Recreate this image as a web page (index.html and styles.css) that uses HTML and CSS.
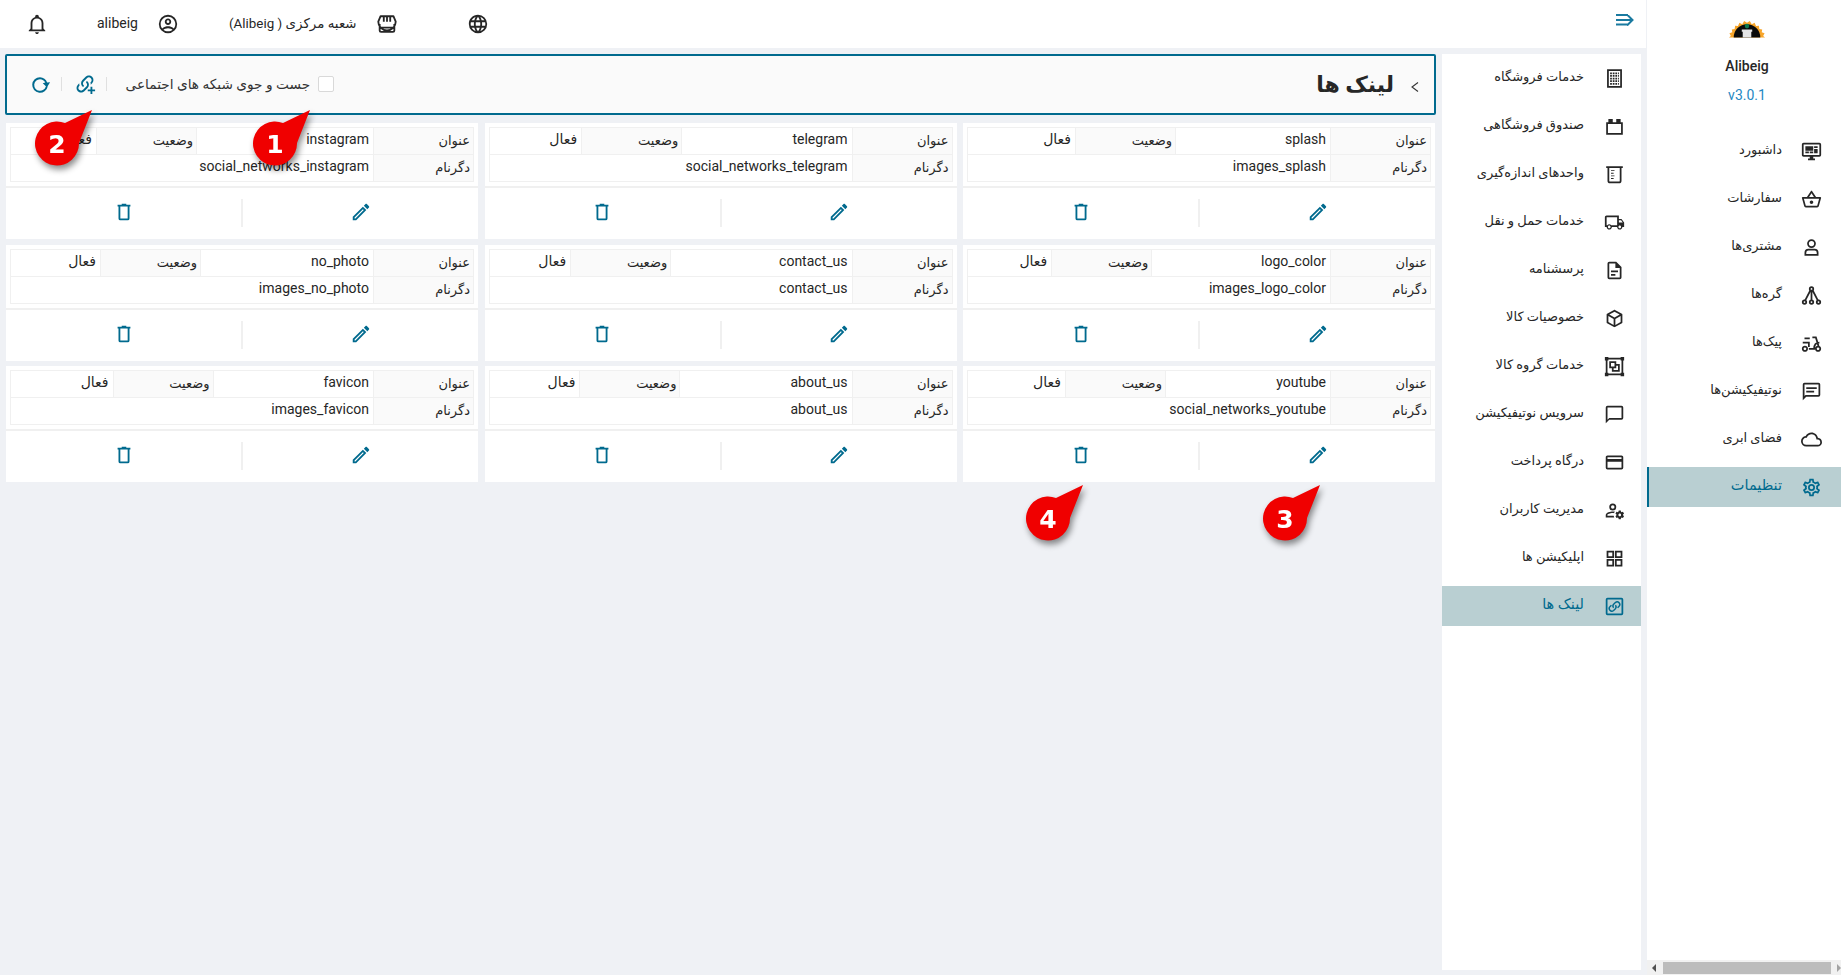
FILE: index.html
```html
<!DOCTYPE html>
<html lang="fa">
<head>
<meta charset="utf-8">
<title>لینک ها</title>
<link rel="stylesheet" href="styles.css">
</head>
<body>
<svg class="defs" aria-hidden="true">
  <symbol id="i-pencil" viewBox="0 0 24 24"><path d="M14.06,9L15,9.94L5.92,19H5V18.08L14.06,9M17.66,3C17.41,3 17.15,3.1 16.96,3.29L15.13,5.12L18.88,8.87L20.71,7.04C21.1,6.65 21.1,6 20.71,5.63L18.37,3.29C18.17,3.09 17.92,3 17.66,3M14.06,6.19L3,17.25V21H6.75L17.81,9.94L14.06,6.19Z"/></symbol>
  <symbol id="i-trash" viewBox="0 0 24 24"><path d="M9.5,3V4H5V6H6V19A2,2 0 0,0 8,21H16A2,2 0 0,0 18,19V6H19V4H14.5V3H9.5M8,6H16V19H8V6Z"/></symbol>
</svg>

<div class="app">
  <div class="workspace">
    <header class="topbar">
      <svg class="ico bell" viewBox="0 0 24 24"><path d="M10 21H14C14 22.1 13.1 23 12 23S10 22.1 10 21M21 19V20H3V19L5 17V11C5 7.9 7 5.2 10 4.3V4C10 2.9 10.9 2 12 2S14 2.9 14 4V4.3C17 5.2 19 7.9 19 11V17L21 19M17 11C17 8.2 14.8 6 12 6S7 8.2 7 11V18H17V11Z"/></svg>
      <div class="top-group user"><span>alibeig</span>
        <svg class="ico" viewBox="0 0 24 24"><path d="M12,2A10,10 0 0,0 2,12A10,10 0 0,0 12,22A10,10 0 0,0 22,12A10,10 0 0,0 12,2M7.07,18.28C7.5,17.38 10.12,16.5 12,16.5C13.88,16.5 16.5,17.38 16.93,18.28C15.57,19.36 13.86,20 12,20C10.14,20 8.43,19.36 7.07,18.28M18.36,16.83C16.93,15.09 13.46,14.5 12,14.5C10.54,14.5 7.07,15.09 5.64,16.83C4.62,15.5 4,13.82 4,12C4,7.59 7.59,4 12,4C16.41,4 20,7.59 20,12C20,13.82 19.38,15.5 18.36,16.83M12,6C10.06,6 8.5,7.56 8.5,9.5C8.5,11.44 10.06,13 12,13C13.94,13 15.5,11.44 15.5,9.5C15.5,7.56 13.94,6 12,6M12,11A1.5,1.5 0 0,1 10.5,9.5A1.5,1.5 0 0,1 12,8A1.5,1.5 0 0,1 13.5,9.5A1.5,1.5 0 0,1 12,11Z"/></svg>
      </div>
      <div class="top-group branch"><span dir="rtl">شعبه مرکزی ( Alibeig)</span>
        <svg class="ico stroke" viewBox="0 0 24 24"><path d="M5 3.5H19L21.5 9.5A2.4 2.4 0 0 1 2.5 9.5ZM4 12V19A1.5 1.5 0 0 0 5.5 20.5H18.5A1.5 1.5 0 0 0 20 19V12M4 16H20M8.5 3.5V9.5M12 3.5V9.5M15.5 3.5V9.5"/></svg>
      </div>
      <svg class="ico globe" viewBox="0 0 24 24"><path d="M16.36,14C16.44,13.34 16.5,12.68 16.5,12C16.5,11.32 16.44,10.66 16.36,10H19.74C19.9,10.64 20,11.31 20,12C20,12.69 19.9,13.36 19.74,14M14.59,19.56C15.19,18.45 15.65,17.25 15.97,16H18.92C17.96,17.65 16.43,18.93 14.59,19.56M14.34,14H9.66C9.56,13.34 9.5,12.68 9.5,12C9.5,11.32 9.56,10.65 9.66,10H14.34C14.43,10.65 14.5,11.32 14.5,12C14.5,12.68 14.43,13.34 14.34,14M12,19.96C11.17,18.76 10.5,17.43 10.09,16H13.91C13.5,17.43 12.83,18.76 12,19.96M8,8H5.08C6.03,6.34 7.57,5.06 9.4,4.44C8.8,5.55 8.35,6.75 8,8M5.08,16H8C8.35,17.25 8.8,18.45 9.4,19.56C7.57,18.93 6.03,17.65 5.08,16M4.26,14C4.1,13.36 4,12.69 4,12C4,11.31 4.1,10.64 4.26,10H7.64C7.56,10.66 7.5,11.32 7.5,12C7.5,12.68 7.56,13.34 7.64,14M12,4.03C12.83,5.23 13.5,6.57 13.91,8H10.09C10.5,6.57 11.17,5.23 12,4.03M18.92,8H15.97C15.65,6.75 15.19,5.55 14.59,4.44C16.43,5.07 17.96,6.34 18.92,8M12,2C6.47,2 2,6.5 2,12A10,10 0 0,0 12,22A10,10 0 0,0 22,12A10,10 0 0,0 12,2Z"/></svg>
      <svg class="toggle" viewBox="0 0 18 12"><path d="M0 1H12M0 6H16M0 10.5H12M11 0.5L16.5 6L11 11.5"/></svg>
    </header>

    <div class="body-row">
      <main class="content">
        <section class="page-head">
          <div class="title-wrap">
            <svg class="chev" viewBox="0 0 10 12"><path d="M8 1.5L2 6L8 10.5"/></svg>
            <h1>لینک ها</h1>
          </div>
          <div class="tools">
            <label class="search-check"><span class="box"></span><span>جست و جوی شبکه های اجتماعی</span></label>
            <span class="sep"></span>
            <svg class="tool" viewBox="0 0 24 24"><path d="M10.59 13.41C11 13.8 11 14.44 10.59 14.83C10.2 15.22 9.56 15.22 9.17 14.83C7.22 12.88 7.22 9.71 9.17 7.76V7.76L12.71 4.22C14.66 2.27 17.83 2.27 19.78 4.22C21.73 6.17 21.73 9.34 19.78 11.29L18.29 12.78C18.3 11.96 18.17 11.14 17.89 10.36L18.36 9.88C19.54 8.71 19.54 6.81 18.36 5.64C17.19 4.46 15.29 4.46 14.12 5.64L10.59 9.17C9.41 10.34 9.41 12.24 10.59 13.41M13.41 9.17C13.8 8.78 14.44 8.78 14.83 9.17C16.78 11.12 16.78 14.29 14.83 16.24V16.24L11.29 19.78C9.34 21.73 6.17 21.73 4.22 19.78C2.27 17.83 2.27 14.66 4.22 12.71L5.71 11.22C5.7 12.04 5.83 12.86 6.11 13.65L5.64 14.12C4.46 15.29 4.46 17.19 5.64 18.36C6.81 19.54 8.71 19.54 9.88 18.36L13.41 14.83C14.59 13.66 14.59 11.76 13.41 10.59C13 10.2 13 9.56 13.41 9.17M20 18V15H18V18H15V20H18V23H20V20H23V18H20Z"/></svg>
            <span class="sep"></span>
            <svg class="tool refresh" viewBox="0 0 24 24"><path d="M12 3.5A8.5 8.5 0 1 0 20.4 13.5H18.3A6.4 6.4 0 1 1 12 5.6C14.6 5.6 16.7 7.1 17.8 9.4L15 10L19.6 14.4L23 9L19.8 9.2C18.6 5.8 15.6 3.5 12 3.5Z"/></svg>
          </div>
        </section>

        <div class="cards">
          <article class="card"><table><tr><th>عنوان</th><td>splash</td><th>وضعیت</th><td>فعال</td></tr><tr><th>دگرنام</th><td colspan="3">images_splash</td></tr></table><div class="actions"><div class="act"><svg class="a-ico"><use href="#i-pencil"/></svg></div><div class="act"><svg class="a-ico"><use href="#i-trash"/></svg></div></div></article>
          <article class="card"><table><tr><th>عنوان</th><td>telegram</td><th>وضعیت</th><td>فعال</td></tr><tr><th>دگرنام</th><td colspan="3">social_networks_telegram</td></tr></table><div class="actions"><div class="act"><svg class="a-ico"><use href="#i-pencil"/></svg></div><div class="act"><svg class="a-ico"><use href="#i-trash"/></svg></div></div></article>
          <article class="card"><table><tr><th>عنوان</th><td>instagram</td><th>وضعیت</th><td>فعال</td></tr><tr><th>دگرنام</th><td colspan="3">social_networks_instagram</td></tr></table><div class="actions"><div class="act"><svg class="a-ico"><use href="#i-pencil"/></svg></div><div class="act"><svg class="a-ico"><use href="#i-trash"/></svg></div></div></article>
          <article class="card"><table><tr><th>عنوان</th><td>logo_color</td><th>وضعیت</th><td>فعال</td></tr><tr><th>دگرنام</th><td colspan="3">images_logo_color</td></tr></table><div class="actions"><div class="act"><svg class="a-ico"><use href="#i-pencil"/></svg></div><div class="act"><svg class="a-ico"><use href="#i-trash"/></svg></div></div></article>
          <article class="card"><table><tr><th>عنوان</th><td>contact_us</td><th>وضعیت</th><td>فعال</td></tr><tr><th>دگرنام</th><td colspan="3">contact_us</td></tr></table><div class="actions"><div class="act"><svg class="a-ico"><use href="#i-pencil"/></svg></div><div class="act"><svg class="a-ico"><use href="#i-trash"/></svg></div></div></article>
          <article class="card"><table><tr><th>عنوان</th><td>no_photo</td><th>وضعیت</th><td>فعال</td></tr><tr><th>دگرنام</th><td colspan="3">images_no_photo</td></tr></table><div class="actions"><div class="act"><svg class="a-ico"><use href="#i-pencil"/></svg></div><div class="act"><svg class="a-ico"><use href="#i-trash"/></svg></div></div></article>
          <article class="card"><table><tr><th>عنوان</th><td>youtube</td><th>وضعیت</th><td>فعال</td></tr><tr><th>دگرنام</th><td colspan="3">social_networks_youtube</td></tr></table><div class="actions"><div class="act"><svg class="a-ico"><use href="#i-pencil"/></svg></div><div class="act"><svg class="a-ico"><use href="#i-trash"/></svg></div></div></article>
          <article class="card"><table><tr><th>عنوان</th><td>about_us</td><th>وضعیت</th><td>فعال</td></tr><tr><th>دگرنام</th><td colspan="3">about_us</td></tr></table><div class="actions"><div class="act"><svg class="a-ico"><use href="#i-pencil"/></svg></div><div class="act"><svg class="a-ico"><use href="#i-trash"/></svg></div></div></article>
          <article class="card"><table><tr><th>عنوان</th><td>favicon</td><th>وضعیت</th><td>فعال</td></tr><tr><th>دگرنام</th><td colspan="3">images_favicon</td></tr></table><div class="actions"><div class="act"><svg class="a-ico"><use href="#i-pencil"/></svg></div><div class="act"><svg class="a-ico"><use href="#i-trash"/></svg></div></div></article>
        </div>
      </main>

      <nav class="submenu">
        <a class="sub-item"><svg class="m-ico" viewBox="0 0 24 24"><path class="ln" d="M4.5 2.5H19.5V21.5H4.5Z"/><path class="dots" d="M7 6H17M7 9H17M7 12H17M7 15H17M7 18H17"/></svg><span>خدمات فروشگاه</span></a>
        <a class="sub-item"><svg class="m-ico" viewBox="0 0 24 24"><path class="ln" d="M3.5 8H20.5V20.5H3.5Z"/><path d="M5 3.5H10V8H5ZM14 3.5H19V8H14Z"/></svg><span>صندوق فروشگاهی</span></a>
        <a class="sub-item"><svg class="m-ico" viewBox="0 0 24 24"><path class="ln" d="M2.5 3.5H21.5M5 3.5V19A2 2 0 0 0 7 21H17A2 2 0 0 0 19 19V3.5"/><path d="M8 7H12V8H8ZM8 10H11V11H8ZM8 13H12V14H8ZM8 16H11V17H8Z"/></svg><span>واحدهای اندازه‌گیری</span></a>
        <a class="sub-item"><svg class="m-ico" viewBox="0 0 24 24"><path d="M18,18.5C18.83,18.5 19.5,17.83 19.5,17C19.5,16.17 18.83,15.5 18,15.5C17.17,15.5 16.5,16.17 16.5,17C16.5,17.83 17.17,18.5 18,18.5M19.5,9.5H17V12H21.46L19.5,9.5M6,18.5C6.83,18.5 7.5,17.83 7.5,17C7.5,16.17 6.83,15.5 6,15.5C5.17,15.5 4.5,16.17 4.5,17C4.5,17.83 5.17,18.5 6,18.5M20,8L23,12V17H21C21,18.66 19.66,20 18,20C16.34,20 15,18.66 15,17H9C9,18.66 7.66,20 6,20C4.34,20 3,18.66 3,17H1V6C1,4.89 1.89,4 3,4H17V8H20M3,6V15H3.76C4.31,14.39 5.11,14 6,14C6.89,14 7.69,14.39 8.24,15H15V6H3Z"/></svg><span>خدمات حمل و نقل</span></a>
        <a class="sub-item"><svg class="m-ico" viewBox="0 0 24 24"><path d="M6,2A2,2 0 0,0 4,4V20A2,2 0 0,0 6,22H18A2,2 0 0,0 20,20V8L14,2H6M6,4H13V9H18V20H6V4M8,12V14H16V12H8M8,16V18H13V16H8Z"/></svg><span>پرسشنامه</span></a>
        <a class="sub-item"><svg class="m-ico" viewBox="0 0 24 24"><path d="M21,16.5C21,16.88 20.79,17.21 20.47,17.38L12.57,21.82C12.41,21.94 12.21,22 12,22C11.79,22 11.59,21.94 11.43,21.82L3.53,17.38C3.21,17.21 3,16.88 3,16.5V7.5C3,7.12 3.21,6.79 3.53,6.62L11.43,2.18C11.59,2.06 11.79,2 12,2C12.21,2 12.41,2.06 12.57,2.18L20.47,6.62C20.79,6.79 21,7.12 21,7.5V16.5M12,4.15L6.04,7.5L12,10.85L17.96,7.5L12,4.15M5,15.91L11,19.29V12.58L5,9.21V15.91M19,15.91V9.21L13,12.58V19.29L19,15.91Z"/></svg><span>خصوصیات کالا</span></a>
        <a class="sub-item"><svg class="m-ico" viewBox="0 0 24 24"><path d="M1,1V5H2V19H1V23H5V22H19V23H23V19H22V5H23V1H19V2H5V1M5,4H19V5H20V19H19V20H5V19H4V5H5M6,6V14H9V18H18V9H14V6M8,8H12V12H8M14,11H16V16H11V14H14"/></svg><span>خدمات گروه کالا</span></a>
        <a class="sub-item"><svg class="m-ico" viewBox="0 0 24 24"><path d="M20,2H4A2,2 0 0,0 2,4V22L6,18H20A2,2 0 0,0 22,16V4A2,2 0 0,0 20,2M20,16H6L4,18V4H20"/></svg><span>سرویس نوتیفیکیشن</span></a>
        <a class="sub-item"><svg class="m-ico" viewBox="0 0 24 24"><path d="M20,4H4C2.89,4 2,4.89 2,6V18A2,2 0 0,0 4,20H20A2,2 0 0,0 22,18V6C22,4.89 21.1,4 20,4M20,18H4V11H20V18M20,8H4V6H20V8Z"/></svg><span>درگاه پرداخت</span></a>
        <a class="sub-item"><svg class="m-ico" viewBox="0 0 24 24"><path d="M10 4A4 4 0 0 0 6 8A4 4 0 0 0 10 12A4 4 0 0 0 14 8A4 4 0 0 0 10 4M10 6A2 2 0 0 1 12 8A2 2 0 0 1 10 10A2 2 0 0 1 8 8A2 2 0 0 1 10 6M17 12C16.84 12 16.76 12.08 16.76 12.24L16.5 13.5C16.28 13.68 15.96 13.84 15.72 14L14.44 13.5C14.36 13.5 14.2 13.5 14.12 13.6L13.16 15.36C13.08 15.44 13.08 15.6 13.24 15.68L14.28 16.5V17.5L13.24 18.32C13.16 18.4 13.08 18.56 13.16 18.64L14.12 20.4C14.2 20.5 14.36 20.5 14.44 20.5L15.72 20C15.96 20.16 16.28 20.32 16.5 20.5L16.76 21.76C16.76 21.92 16.84 22 17 22H19C19.08 22 19.24 21.92 19.24 21.76L19.4 20.5C19.72 20.32 20.04 20.16 20.28 20L21.5 20.5C21.64 20.5 21.8 20.5 21.8 20.4L22.84 18.64C22.92 18.56 22.84 18.4 22.76 18.32L21.72 17.5V16.5L22.76 15.68C22.84 15.6 22.92 15.44 22.84 15.36L21.8 13.6C21.8 13.5 21.64 13.5 21.5 13.5L20.28 14C20.04 13.84 19.72 13.68 19.4 13.5L19.24 12.24C19.24 12.08 19.08 12 19 12H17M10 13C7.33 13 2 14.33 2 17V20H11.67C11.39 19.41 11.19 18.77 11.09 18.1H3.9V17C3.9 16.36 7.03 14.9 10 14.9C10.5 14.9 11 14.95 11.5 15.03C11.69 14.36 12 13.73 12.41 13.18C11.5 13.07 10.67 13 10 13M18.04 15.5C18.84 15.5 19.5 16.16 19.5 17.04C19.5 17.84 18.84 18.5 18.04 18.5C17.16 18.5 16.5 17.84 16.5 17.04C16.5 16.16 17.16 15.5 18.04 15.5Z"/></svg><span>مدیریت کاربران</span></a>
        <a class="sub-item"><svg class="m-ico" viewBox="0 0 24 24"><path class="ln" d="M4 4H10.5V10.5H4ZM13.5 4H20V10.5H13.5ZM4 13.5H10.5V20H4ZM13.5 13.5H20V20H13.5Z"/></svg><span>اپلیکیشن ها</span></a>
        <a class="sub-item active"><svg class="m-ico" viewBox="0 0 24 24"><path class="ln" d="M4 3H20A1 1 0 0 1 21 4V20A1 1 0 0 1 20 21H4A1 1 0 0 1 3 20V4A1 1 0 0 1 4 3Z"/><path class="ln thin" d="M11 13.5A3 3 0 0 1 11 9.5L13 7.5A3 3 0 0 1 17 12L15.5 13.5M13 10.5A3 3 0 0 1 13 14.5L11 16.5A3 3 0 0 1 7 12L8.5 10.5"/></svg><span>لینک ها</span></a>
      </nav>
    </div>
  </div>

  <aside class="sidebar">
    <div class="brand">
      <svg class="logo" viewBox="0 0 40 21">
        <path class="logo-rays" d="M1 20.5L3 19L1.5 16L4.5 15L4 12L7 11.5L7.5 8L10.5 8.5L12 5L15 6.5L17 3L20 5L23 3L25 6.5L28 5L29.5 8.5L32.5 8L33 11.5L36 12L35.5 15L38.5 16L37 19L39 20.5Z"/>
        <path class="logo-dark" d="M6 20.5A14 14 0 0 1 34 20.5Z"/>
        <path class="logo-cup" d="M14.5 12H25.5V14.5H24.5V20.5H15.5V14.5H14.5Z"/>
        <circle class="logo-leaf" cx="20" cy="8.5" r="2.4"/>
      </svg>
      <div class="brand-name">Alibeig</div>
      <div class="brand-version">v3.0.1</div>
    </div>
    <nav class="mainmenu">
      <a class="main-item"><svg class="m-ico" viewBox="0 0 24 24"><path d="M21,16V4H3V16H21M21,2A2,2 0 0,1 23,4V16A2,2 0 0,1 21,18H14V20H16V22H8V20H10V18H3C1.89,18 1,17.1 1,16V4C1,2.89 1.89,2 3,2H21M5,6H14V11H5V6M15,6H19V8H15V6M19,9V14H15V9H19M5,12H9V14H5V12M10,12H14V14H10V12Z"/></svg><span>داشبورد</span></a>
      <a class="main-item"><svg class="m-ico" viewBox="0 0 24 24"><path d="M22,9H17.21L12.82,2.43C12.63,2.15 12.31,2 12,2C11.69,2 11.37,2.14 11.18,2.43L6.79,9H2C1.45,9 1,9.45 1,10C1,10.09 1,10.18 1.04,10.27L3.58,19.54C3.81,20.38 4.58,21 5.5,21H18.5C19.42,21 20.19,20.38 20.43,19.54L22.97,10.27L23,10C23,9.45 22.55,9 22,9M12,4.8L14.8,9H9.2L12,4.8M18.5,19L5.5,19L3.31,11H20.7L18.5,19M12,13C10.9,13 10,13.9 10,15C10,16.1 10.9,17 12,17C13.1,17 14,16.1 14,15C14,13.9 13.1,13 12,13Z"/></svg><span>سفارشات</span></a>
      <a class="main-item"><svg class="m-ico" viewBox="0 0 24 24"><path class="ln" d="M12 3.5A4 4 0 1 1 12 11.5A4 4 0 1 1 12 3.5ZM5 20.5V18A3.5 3.5 0 0 1 8.5 14.5H15.5A3.5 3.5 0 0 1 19 18V20.5Z"/></svg><span>مشتری‌ها</span></a>
      <a class="main-item"><svg class="m-ico" viewBox="0 0 24 24"><path class="ln" d="M12 2.5A2 2 0 1 1 12 6.5A2 2 0 1 1 12 2.5ZM4 17.5A2 2 0 1 1 4 21.5A2 2 0 1 1 4 17.5ZM12 17.5A2 2 0 1 1 12 21.5A2 2 0 1 1 12 17.5ZM20 17.5A2 2 0 1 1 20 21.5A2 2 0 1 1 20 17.5ZM12 6.5V17.5M10.8 6L4.8 17.6M13.2 6L19.2 17.6"/></svg><span>گره‌ها</span></a>
      <a class="main-item"><svg class="m-ico" viewBox="0 0 24 24"><path class="ln" d="M4.5 15.5A2.5 2.5 0 1 1 4.5 20.5A2.5 2.5 0 1 1 4.5 15.5ZM19.5 15.5A2.5 2.5 0 1 1 19.5 20.5A2.5 2.5 0 1 1 19.5 15.5ZM4 6H10M2 11H9V16M9 18H15C15 13 17 11 21 11M13 5H17L20 15"/></svg><span>پیک‌ها</span></a>
      <a class="main-item"><svg class="m-ico" viewBox="0 0 24 24"><path d="M20,2H4A2,2 0 0,0 2,4V22L6,18H20A2,2 0 0,0 22,16V4A2,2 0 0,0 20,2M20,16H5.17L4,17.17V4H20V16M6,7H18V9H6V7M6,11H15V13H6V11Z"/></svg><span>نوتیفیکیشن‌ها</span></a>
      <a class="main-item"><svg class="m-ico" viewBox="0 0 24 24"><path d="M19.35,10.03C18.67,6.59 15.64,4 12,4C9.11,4 6.6,5.64 5.35,8.03C2.34,8.36 0,10.9 0,14A6,6 0 0,0 6,20H19A5,5 0 0,0 24,15C24,12.36 21.95,10.22 19.35,10.03M19,18H6A4,4 0 0,1 2,14C2,11.95 3.53,10.24 5.56,10.03L6.63,9.92L7.13,8.97C8.08,7.14 9.94,6 12,6C14.62,6 16.88,7.86 17.39,10.43L17.69,11.93L19.22,12.04C20.78,12.14 22,13.45 22,15A3,3 0 0,1 19,18Z"/></svg><span>فضای ابری</span></a>
      <a class="main-item active"><svg class="m-ico" viewBox="0 0 24 24"><path d="M12,8A4,4 0 0,1 16,12A4,4 0 0,1 12,16A4,4 0 0,1 8,12A4,4 0 0,1 12,8M12,10A2,2 0 0,0 10,12A2,2 0 0,0 12,14A2,2 0 0,0 14,12A2,2 0 0,0 12,10M10,22C9.75,22 9.54,21.82 9.5,21.58L9.13,18.93C8.5,18.68 7.96,18.34 7.44,17.94L4.95,18.95C4.73,19.03 4.46,18.95 4.34,18.73L2.34,15.27C2.21,15.05 2.27,14.78 2.46,14.63L4.57,12.97L4.5,12L4.57,11L2.46,9.37C2.27,9.22 2.21,8.95 2.34,8.73L4.34,5.27C4.46,5.05 4.73,4.96 4.95,5.05L7.44,6.05C7.96,5.66 8.5,5.32 9.13,5.07L9.5,2.42C9.54,2.18 9.75,2 10,2H14C14.25,2 14.46,2.18 14.5,2.42L14.87,5.07C15.5,5.32 16.04,5.66 16.56,6.05L19.05,5.05C19.27,4.96 19.54,5.05 19.66,5.27L21.66,8.73C21.79,8.95 21.73,9.22 21.54,9.37L19.43,11L19.5,12L19.43,13L21.54,14.63C21.73,14.78 21.79,15.05 21.66,15.27L19.66,18.73C19.54,18.95 19.27,19.04 19.05,18.95L16.56,17.95C16.04,18.34 15.5,18.68 14.87,18.93L14.5,21.58C14.46,21.82 14.25,22 14,22H10M11.25,4L10.88,6.61C9.68,6.86 8.62,7.5 7.85,8.39L5.44,7.35L4.69,8.65L6.8,10.2C6.4,11.37 6.4,12.64 6.8,13.8L4.68,15.36L5.43,16.66L7.86,15.62C8.63,16.5 9.68,17.14 10.87,17.38L11.24,20H12.76L13.13,17.39C14.32,17.14 15.37,16.5 16.14,15.62L18.57,16.66L19.32,15.36L17.2,13.81C17.6,12.64 17.6,11.37 17.2,10.2L19.31,8.65L18.56,7.35L16.15,8.39C15.38,7.5 14.32,6.86 13.12,6.62L12.75,4H11.25Z"/></svg><span>تنظیمات</span></a>
    </nav>
    <div class="hscroll"><span class="arrow left"></span><span class="thumb"></span><span class="arrow right"></span></div>
  </aside>
</div>

<svg class="badge b1" viewBox="0 0 80 80"><path d="M65 16L38 29A22 22 0 1 0 52 49Z"/><text x="30" y="59">1</text></svg>
<svg class="badge b2" viewBox="0 0 80 80"><path d="M65 16L38 29A22 22 0 1 0 52 49Z"/><text x="30" y="59">2</text></svg>
<svg class="badge b3" viewBox="0 0 80 80"><path d="M65 16L38 29A22 22 0 1 0 52 49Z"/><text x="30" y="59">3</text></svg>
<svg class="badge b4" viewBox="0 0 80 80"><path d="M65 16L38 29A22 22 0 1 0 52 49Z"/><text x="30" y="59">4</text></svg>
</body>
</html>
```
FILE: styles.css
```css
* { box-sizing: border-box; }
html, body { margin: 0; height: 100%; overflow: hidden; }
body {
  position: relative;
  background: #eff1f5;
  color: #262626;
  font-family: Roboto, "Noto Sans", "DejaVu Sans", sans-serif;
  font-size: 14px;
}
.defs { display: none; }

.app { display: flex; height: 975px; }
.workspace { width: 1646px; display: flex; flex-direction: column; }
.sidebar { width: 194px; margin-left: 1px; background: #fff; display: flex; flex-direction: column; }

/* top bar */
.topbar {
  height: 48px; flex: none; background: #fff;
  display: flex; align-items: center;
  padding: 0 12px 0 26px;
  font-size: 13px; color: #262626;
}
.ico { width: 22px; height: 22px; fill: #262626; flex: none; }
.ico.stroke { fill: none; stroke: #262626; stroke-width: 2; stroke-linejoin: round; }
.top-group { display: flex; align-items: center; gap: 19px; }
.top-group span { position: relative; top: -1px; }
.user { margin-left: 49px; font-size: 14px; }
.branch { margin-left: 50px; font-size: 13.4px; }
.globe { margin-left: 69px; }
.toggle { width: 18px; height: 12px; margin-left: auto; margin-bottom: 8px; fill: none; stroke: #1a7aa0; stroke-width: 2; }

.body-row { flex: 1; display: flex; padding: 6px 5px 5px 5px; gap: 6px; min-height: 0; }
.content { flex: 1; min-width: 0; }

/* page head */
.page-head {
  height: 61px;
  background: #fafafa;
  border: 2px solid #006a8e;
  border-radius: 2px;
  display: flex; flex-direction: row-reverse; align-items: center; justify-content: space-between;
  padding: 0 14px 0 12px;
}
.title-wrap { display: flex; flex-direction: row-reverse; align-items: center; gap: 16px; }
.title-wrap h1 { margin: 0; font-size: 22px; font-weight: 700; line-height: 30px; direction: rtl; }
.chev { width: 10px; height: 12px; fill: none; stroke: #333; stroke-width: 1.1; margin-top: 4px; }
.tools { display: flex; flex-direction: row-reverse; align-items: center; margin-bottom: 2px; }
.search-check { display: flex; align-items: center; gap: 8px; direction: rtl; color: #333; font-size: 13.7px; margin-left: 19px; }
.box { width: 16px; height: 16px; background: #fff; border: 1px solid #d9d9d9; border-radius: 2px; }
.sep { width: 1px; height: 14px; background: #e0e0e0; }
.tool { width: 22px; height: 22px; fill: #006a8e; margin: 0 10px 0 11.5px; }
.tool.refresh { margin: 3px 10px 0 10px; }

/* cards */
.cards { display: grid; direction: rtl; grid-template-columns: repeat(3, 1fr); gap: 5.5px 6.5px; margin: 8px 1px 0 1px; }
.card { background: #fff; height: 116px; padding-top: 4px; }
.card table { width: calc(100% - 8px); margin: 0 4px; border-collapse: collapse; font-size: 14px; border: 1px solid #f0f0f0; }
.card tr { height: 27px; }
.card th, .card td { border: 1px solid #f0f0f0; padding: 0 4px 4px; text-align: right; font-weight: 400; white-space: nowrap; }
.card td:last-child { padding-left: 2px; }
.card th { background: #fafafa; width: 100px; min-width: 100px; font-size: 13px; padding: 0 3px 1px; }
.actions { display: flex; direction: ltr; flex-direction: row-reverse; margin-top: 4px; border-top: 2px solid #f0f0f0; padding: 11px 0; }
.act { flex: 1; height: 28px; display: flex; align-items: center; justify-content: center; padding-bottom: 2px; }
.act:first-child { border-left: 2px solid #f0f0f0; }
.a-ico { width: 22px; height: 22px; fill: #006a8e; }

/* submenu */
.submenu { width: 199px; flex: none; background: #fff; padding-top: 4px; }
.sub-item, .main-item {
  height: 40px; margin-bottom: 8px;
  display: flex; flex-direction: row-reverse; align-items: center;
  font-size: 13px; color: #262626;
}
.sub-item { padding-right: 16px; }
.sub-item span { margin-right: 20px; direction: rtl; position: relative; top: -2px; }
.main-item { padding-right: 19px; }
.main-item span { margin-right: 19px; direction: rtl; position: relative; top: -2px; }
.m-ico { width: 21px; height: 21px; fill: #262626; flex: none; }
.m-ico .ln { fill: none; stroke: #262626; stroke-width: 2; }
.m-ico .thin { stroke-width: 1.6; }
.m-ico .dots { fill: none; stroke: #262626; stroke-width: 2; stroke-dasharray: 2 1; }
.active { background: #b9cfd2; color: #006a8e; }
.sub-item.active, .main-item.active { color: #006a8e; font-size: 14.5px; }
.active .m-ico { fill: #006a8e; }
.active .m-ico .ln { stroke: #006a8e; }
.main-item.active { border-left: 2px solid #006a8e; }

/* sidebar */
.brand { height: 131px; padding: 18px 0 0 6px; text-align: center; flex: none; }
.logo { width: 38px; height: 20px; display: block; margin: 0 auto; }
.logo-rays { fill: #f7a52a; }
.logo-dark { fill: #0a0a0a; }
.logo-cup { fill: #e4e4e4; }
.logo-leaf { fill: #0d7a50; }
.brand-name { margin-top: 19px; font-weight: 500; font-size: 14px; line-height: 18px; }
.brand-version { margin-top: 11px; font-size: 14px; line-height: 18px; color: #2688c2; }
.mainmenu { flex: 1; }
.hscroll { height: 15px; flex: none; background: #f1f1f1; display: flex; align-items: center; padding: 0 0 0 5px; }
.thumb { width: 168px; height: 12px; background: #bcbcbc; margin: 0 6px 0 7px; }
.arrow { width: 0; height: 0; border-top: 4px solid transparent; border-bottom: 4px solid transparent; }
.arrow.left { border-right: 4px solid #505050; }
.arrow.right { border-left: 4px solid #a3a3a3; }

/* annotation badges */
.badge { position: absolute; width: 80px; height: 80px; overflow: visible; filter: drop-shadow(2px 4px 3px rgba(0,0,0,.45)); }
.badge path { fill: #f00000; }
.badge text { fill: #fff; font-family: "DejaVu Sans", sans-serif; font-weight: 700; font-size: 25px; text-anchor: middle; }
.b1 { left: 245px; top: 94px; }
.b2 { left: 27px; top: 94px; }
.b3 { left: 1255px; top: 469px; }
.b4 { left: 1018px; top: 469px; }
```
